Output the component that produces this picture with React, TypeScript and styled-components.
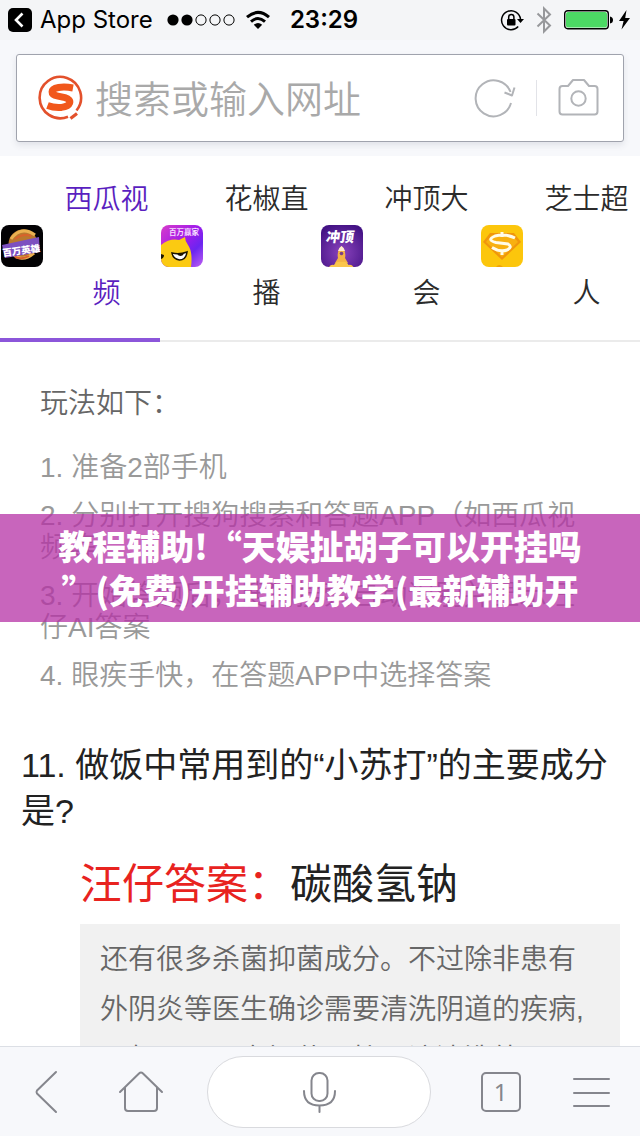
import React from "react";
import styled, { createGlobalStyle } from "styled-components";

const latin = `"Liberation Sans", "Noto Sans CJK SC", sans-serif`;
const system = `Inter, "Noto Sans CJK SC", sans-serif`;

const GlobalStyle = createGlobalStyle`
  * { box-sizing: border-box; }
  body { margin: 0; background: #fff; font-family: ${latin}; font-weight: 350; }
  button { border: 0; padding: 0; background: none; font: inherit; color: inherit; cursor: pointer; }
  svg { display: block; flex: none; }
`;

const Screen = styled.div`
  display: flex;
  flex-direction: column;
  height: 100vh;
  overflow: hidden;
  background: #fff;
`;

const StatusBar = styled.div`
  flex: none;
  display: flex;
  align-items: center;
  justify-content: space-between;
  height: 40px;
  padding: 0 8px;
  background: #f4f5f7;
  font: 400 24px/40px ${system};
  color: #000;
`;

const StatusGroup = styled.div`
  flex: 1;
  display: flex;
  align-items: center;
  gap: 10px;
`;

const StatusEnd = styled(StatusGroup)`
  justify-content: flex-end;
  gap: 12px;
`;

const BackToApp = styled.button`
  display: flex;
  align-items: center;
  gap: 8px;
  white-space: nowrap;
  margin-right: 4px;
`;

const Clock = styled.time`
  font-weight: 600;
  padding-left: 8px;
`;

const Header = styled.header`
  flex: none;
  padding: 14px 16px;
  background: #f7f8fb;
`;

const SearchForm = styled.form`
  display: flex;
  align-items: center;
  height: 88px;
  padding: 0 24px 0 20px;
  background: #fff;
  border: 1px solid #a0a3ad;
  border-radius: 3px;
  box-shadow: 0 3px 6px rgba(90, 100, 120, 0.14);
`;

const SearchInput = styled.input`
  flex: 1;
  min-width: 0;
  height: 60px;
  margin-left: 12px;
  padding: 0 0 4px;
  border: 0;
  outline: 0;
  background: transparent;
  font: 350 38px/56px "Noto Sans CJK SC", sans-serif;
  color: #333;
  &::placeholder { color: #a9a9a9; opacity: 1; }
`;

const Divider = styled.span`
  width: 1px;
  height: 36px;
  margin: 0 20px;
  background: #e2e3e8;
`;

const Tabs = styled.nav`
  flex: none;
  display: grid;
  grid-template-columns: repeat(4, 1fr);
  border-bottom: 2px solid #ebebeb;
`;

const Tab = styled.button<{ $active?: boolean }>`
  position: relative;
  display: flex;
  align-items: center;
  height: 184px;
  padding: 0 0 4px 1px;
  font-size: 28px;
  line-height: 94px;
  color: ${(p) => (p.$active ? "#5a1fc0" : "#2b2b2b")};
  &::after {
    content: "";
    display: ${(p) => (p.$active ? "block" : "none")};
    position: absolute;
    left: 0;
    right: 0;
    bottom: -2px;
    height: 4px;
    background: #8c56da;
  }
`;

const TabLabel = styled.span`
  flex: 1;
  padding: 2px 0 0 10px;
  text-align: center;
`;

const Content = styled.main`
  position: relative;
  flex: 1;
  min-height: 0;
  overflow: hidden;
`;

const Rules = styled.section`
  padding: 46px 40px 0;
  font-size: 28px;
  line-height: 32px;
  color: #999;
`;

const RulesTitle = styled.h2`
  margin: 0 0 32px;
  font-size: 28px;
  font-weight: 350;
  color: #666;
`;

const RuleList = styled.div`
  display: grid;
  gap: 16px;
  p { margin: 0; }
`;

const Quiz = styled.section`
  padding: 50px 20px 0;
`;

const Question = styled.h1`
  margin: 0;
  padding-left: 1px;
  font-size: 34px;
  line-height: 46px;
  font-weight: 400;
  color: #222;
`;

const Answer = styled.div`
  padding: 26px 0 0 60px;
`;

const AnswerLine = styled.p`
  margin: 0 0 14px;
  font-size: 42px;
  line-height: 50px;
  font-weight: 400;
  color: #222;
  em { font-style: normal; color: #e8231f; }
`;

const Explanation = styled.p`
  margin: 0;
  padding: 11px 20px;
  background: #f1f1f1;
  font-size: 28px;
  line-height: 50px;
  color: #666;
`;

const Banner = styled.div`
  position: absolute;
  top: 172px;
  left: 0;
  right: 0;
  padding: 10px 0;
  background: rgba(182, 50, 166, 0.75);
  font: 900 34px/44px "Noto Sans CJK SC", sans-serif;
  color: #fff;
  text-align: center;
  white-space: nowrap;
`;

const BannerLine = styled.span`
  display: block;
`;

const Toolbar = styled.footer`
  flex: none;
  display: flex;
  align-items: center;
  justify-content: space-between;
  height: 90px;
  padding: 0 26px 0 24px;
  background: #f7f8fb;
  border-top: 1px solid #dcdfe5;
  color: #85868d;
`;

const ToolButton = styled.button`
  display: grid;
  place-items: center;
  width: 44px;
  height: 72px;
`;

const VoiceButton = styled(ToolButton)`
  width: 224px;
  background: #fff;
  border: 1px solid #d9dade;
  border-radius: 36px;
`;

const TabCount = styled.span`
  display: grid;
  place-items: center;
  width: 40px;
  height: 40px;
  border: 2px solid #85868d;
  border-radius: 5px;
  font: 400 24px/36px "Noto Sans", sans-serif;
`;

const Line = ({ w, h, children }: { w: number; h: number; children: React.ReactNode }) => (
  <svg width={w} height={h} viewBox={`0 0 ${w} ${h}`} fill="none" stroke="currentColor" strokeWidth="2" strokeLinecap="round" strokeLinejoin="round" aria-hidden="true">
    {children}
  </svg>
);

const AppBack = () => (
  <svg width="24" height="24" viewBox="0 0 24 24" aria-hidden="true">
    <rect width="24" height="24" rx="5" fill="#000" />
    <path d="M14.500 5.500 8 12l6.500 6.500" fill="none" stroke="#fff" strokeWidth="2.600" />
  </svg>
);

const Signal = () => (
  <svg width="68" height="12" viewBox="0 0 68 12" aria-hidden="true">
    <circle cx="6" cy="6" r="5.600" />
    <circle cx="20" cy="6" r="5.600" />
    {[34, 48, 62].map((x) => (
      <circle key={x} cx={x} cy="6" r="5.100" fill="none" stroke="#000" />
    ))}
  </svg>
);

const Wifi = () => (
  <svg width="26" height="20" viewBox="0 0 26 20" fill="none" stroke="#000" strokeWidth="3" aria-hidden="true">
    <path d="M2 7.200Q13-2.400 24 7.200M6 11.600Q13 5.400 20 11.600" />
    <path d="M13 19 8.800 14.800Q13 11.200 17.200 14.800Z" fill="#000" stroke="none" />
  </svg>
);

const RotationLock = () => (
  <svg width="24" height="24" viewBox="0 0 24 24" aria-hidden="true">
    <path d="M18.200 18.500A9.500 9.500 0 1 1 20.500 11" fill="none" stroke="#000" strokeWidth="1.500" />
    <path d="M17 11h7l-3.500 4z" />
    <rect x="7" y="11" width="8.500" height="6.500" rx="1" />
    <path d="M8.700 11V9a2.600 2.600 0 0 1 5.200 0v2" fill="none" stroke="#000" strokeWidth="1.500" />
  </svg>
);

const Bluetooth = () => (
  <svg width="16" height="28" viewBox="0 0 16 28" fill="none" stroke="#97989b" strokeWidth="2" aria-hidden="true">
    <path d="M1.500 7.500 14 19.500 8 25.500V2.500L14 8.500 1.500 20.500" />
  </svg>
);

const Battery = () => (
  <svg width="68" height="20" viewBox="0 0 68 20" aria-hidden="true">
    <rect x="0.700" y="0.700" width="43.600" height="18" rx="3" fill="#fff" stroke="#000" strokeWidth="1.400" />
    <rect x="2" y="2" width="41" height="15.400" rx="2" fill="#4cd964" />
    <path d="M46 6.500q3 .5 3 3.500t-3 3.500z" />
    <path d="M62.500 0 55 11h4.600L57.500 19.500 66 8h-4.800z" />
  </svg>
);

const SogouLogo = () => (
  <svg width="46" height="46" viewBox="0 0 46 46" fill="none" stroke="#e3512c" aria-hidden="true">
    <path d="M31 41.800A20.700 20.700 0 1 1 39.500 35.500" strokeWidth="2.600" />
    <path d="M33.500 43.500 40 38.500" strokeWidth="3.200" />
    <path d="M36 13Q28 11.500 21.500 12.500C13 14 13 19.500 21 21.200L28 22.600C36 25 33.500 31.300 24.500 32.400Q17 33 10.500 30.500" stroke="#f1571b" strokeWidth="7" />
  </svg>
);

const HeroIcon = () => (
  <svg width="42" height="42" viewBox="0 0 42 42" aria-hidden="true">
    <rect width="42" height="42" rx="8" fill="#030204" />
    <circle cx="22" cy="19" r="14.500" fill="#b9772f" />
    <path d="M10 14Q20 0 34 10M10 27q10 12 23 1" fill="none" stroke="#eab050" strokeWidth="3" />
    <path d="M14 14q8-6 16-3M14 32q7 3 14-1" fill="none" stroke="#d8622c" strokeWidth="2" />
    <path d="M1 20 38 12l1 15L4 33z" fill="#7d50c0" />
    <text x="1" y="29" transform="rotate(-8 20 24)" fontFamily="Noto Sans CJK SC" fontWeight="900" fontSize="9.500" fill="#fff">百万英雄</text>
  </svg>
);

const HuajiaoIcon = () => (
  <svg width="42" height="42" viewBox="0 0 42 42" aria-hidden="true">
    <defs>
      <linearGradient id="hj" x1="0" y1="0" x2="1" y2="1">
        <stop offset="0" stopColor="#d83cc9" />
        <stop offset="0.450" stopColor="#a01bea" />
        <stop offset="0.700" stopColor="#6b25f0" />
        <stop offset="1" stopColor="#c060f0" />
      </linearGradient>
      <clipPath id="hjc"><rect width="42" height="42" rx="8" /></clipPath>
    </defs>
    <g clipPath="url(#hjc)">
      <rect width="42" height="42" fill="url(#hj)" />
      <path d="M0 20Q9 13 18 15l6-3q0 4 3 8 5 7 3 22H0z" fill="#fbca12" />
      <path d="M11 28q7 2 15-1-1 8-7.500 8-6.500-1-7.500-7z" fill="#fff" stroke="#1d1500" strokeWidth="1.500" />
      <path d="M16 28.500h7q-1 2.500-3.500 2.500t-3.500-2.500zM0 29l3 1q0 3-3 4z" fill="#1d1500" />
    </g>
    <text x="8" y="10" fontFamily="Noto Sans CJK SC" fontWeight="700" fontSize="7.500" fill="#f5dcff">百万赢家</text>
  </svg>
);

const RocketIcon = () => (
  <svg width="42" height="42" viewBox="0 0 42 42" aria-hidden="true">
    <defs>
      <radialGradient id="rk" cx="0.500" cy="0.650" r="0.700">
        <stop offset="0" stopColor="#8a43bd" />
        <stop offset="1" stopColor="#431284" />
      </radialGradient>
    </defs>
    <rect width="42" height="42" rx="8" fill="url(#rk)" />
    <text x="7" y="17" transform="skewX(-8)" fontFamily="Noto Sans CJK SC" fontWeight="900" fontSize="14" fill="#fff">冲顶</text>
    <path d="M20.500 21q5 5 3.500 12l3 5h-13l3-5q-1.500-7 3.500-12z" fill="#f5b345" />
    <path d="M20.500 21q3 2 3.500 5h-7q.5-3 3.500-5z" fill="#ffe9cf" />
    <circle cx="20.500" cy="28.500" r="1.800" fill="#7a3f86" />
    <path d="M8 42q2-3 5-2 2-4 7.500-3 5-1 7 3 3-1 5 2z" fill="#fbc64c" />
  </svg>
);

const CheeseIcon = () => (
  <svg width="42" height="42" viewBox="0 0 42 42" aria-hidden="true">
    <rect width="42" height="42" rx="8" fill="#fcc60c" />
    <path d="M9 8h24l7 9-19 18L2 17z" fill="#f0960c" />
    <path d="M11 10h20l6 7-16 15L5 17z" fill="#f8b010" />
    <path d="M34 13Q25 8.500 14 11q-9 4 1 6.500l12 1.500q5 3-1 6-7 2.500-15-2.500M21 7v5M21 25v5" fill="none" stroke="#fffbe8" strokeWidth="3" />
    <path d="M15 42q3-4 7 0z" fill="#f0a308" />
  </svg>
);

const tabs = [
  { label: "西瓜视频", Icon: HeroIcon, active: true },
  { label: "花椒直播", Icon: HuajiaoIcon },
  { label: "冲顶大会", Icon: RocketIcon },
  { label: "芝士超人", Icon: CheeseIcon },
];

const rules = [
  "1. 准备2部手机",
  "2. 分别打开搜狗搜索和答题APP（如西瓜视频等）",
  "3. 开始答题后，搜狗搜索自动识别并显示汪仔AI答案",
  "4. 眼疾手快，在答题APP中选择答案",
];

export default function App() {
  return (
    <Screen>
      <GlobalStyle />
      <StatusBar>
        <StatusGroup>
          <BackToApp type="button"><AppBack />App Store</BackToApp>
          <Signal />
          <Wifi />
        </StatusGroup>
        <Clock>23:29</Clock>
        <StatusEnd>
          <RotationLock />
          <Bluetooth />
          <Battery />
        </StatusEnd>
      </StatusBar>

      <Header>
        <SearchForm role="search">
          <SogouLogo />
          <SearchInput type="text" aria-label="搜索或输入网址" placeholder="搜索或输入网址" />
          <button type="button" aria-label="刷新">
            <Line w={42} h={42}>
              <g stroke="#b2b4b8" strokeLinecap="butt">
                <path d="M37 26A18 18 0 1 1 36.500 15" />
                <path d="M30.500 15.500 38 18.500l2.500-8" />
              </g>
            </Line>
          </button>
          <Divider />
          <button type="button" aria-label="拍照">
            <Line w={42} h={42}>
              <g stroke="#b2b4b8">
                <path d="M5.500 9H11l5-6h11l5 6h5.500q3 0 3 3v22.500q0 3-3 3h-32q-3 0-3-3V12q0-3 3-3z" />
                <circle cx="21.500" cy="21.500" r="7.200" />
              </g>
            </Line>
          </button>
        </SearchForm>
      </Header>

      <Tabs>
        {tabs.map(({ label, Icon, active }) => (
          <Tab key={label} type="button" $active={active}>
            <Icon />
            <TabLabel>{label}</TabLabel>
          </Tab>
        ))}
      </Tabs>

      <Content>
        <Rules>
          <RulesTitle>玩法如下：</RulesTitle>
          <RuleList>
            {rules.map((rule) => <p key={rule}>{rule}</p>)}
          </RuleList>
        </Rules>
        <Quiz>
          <Question>11. 做饭中常用到的“小苏打”的主要成分是?</Question>
          <Answer>
            <AnswerLine><em>汪仔答案：</em>碳酸氢钠</AnswerLine>
            <Explanation>
              还有很多杀菌抑菌成分。不过除非患有外阴炎等医生确诊需要清洗阴道的疾病,一般不需要专门使用护理液清洗外阴。
            </Explanation>
          </Answer>
        </Quiz>
        <Banner>
          <BannerLine>教程辅助!“天娱扯胡子可以开挂吗</BannerLine>
          <BannerLine>”(免费)开挂辅助教学(最新辅助开</BannerLine>
        </Banner>
      </Content>

      <Toolbar>
        <ToolButton type="button" aria-label="后退">
          <Line w={44} h={44}><path d="M32 2 13 20.500q-1 1.500 0 3L32 42" /></Line>
        </ToolButton>
        <ToolButton type="button" aria-label="主页">
          <Line w={48} h={44}>
            <path d="M4 22 23 3.500q2-2 4 0L46 22M9 18v20q0 3 3 3h26q3 0 3-3V18" />
          </Line>
        </ToolButton>
        <VoiceButton type="button" aria-label="语音搜索">
          <Line w={48} h={44}>
            <rect x="16.500" y="3" width="16" height="28" rx="7.500" />
            <path d="M9 21q0 14.500 15.500 14.500T40 21M24.500 36v6" />
          </Line>
        </VoiceButton>
        <ToolButton type="button" aria-label="标签页"><TabCount>1</TabCount></ToolButton>
        <ToolButton type="button" aria-label="菜单">
          <Line w={40} h={32}><path d="M2 3h35M2 17h35M2 30h35" /></Line>
        </ToolButton>
      </Toolbar>
    </Screen>
  );
}
